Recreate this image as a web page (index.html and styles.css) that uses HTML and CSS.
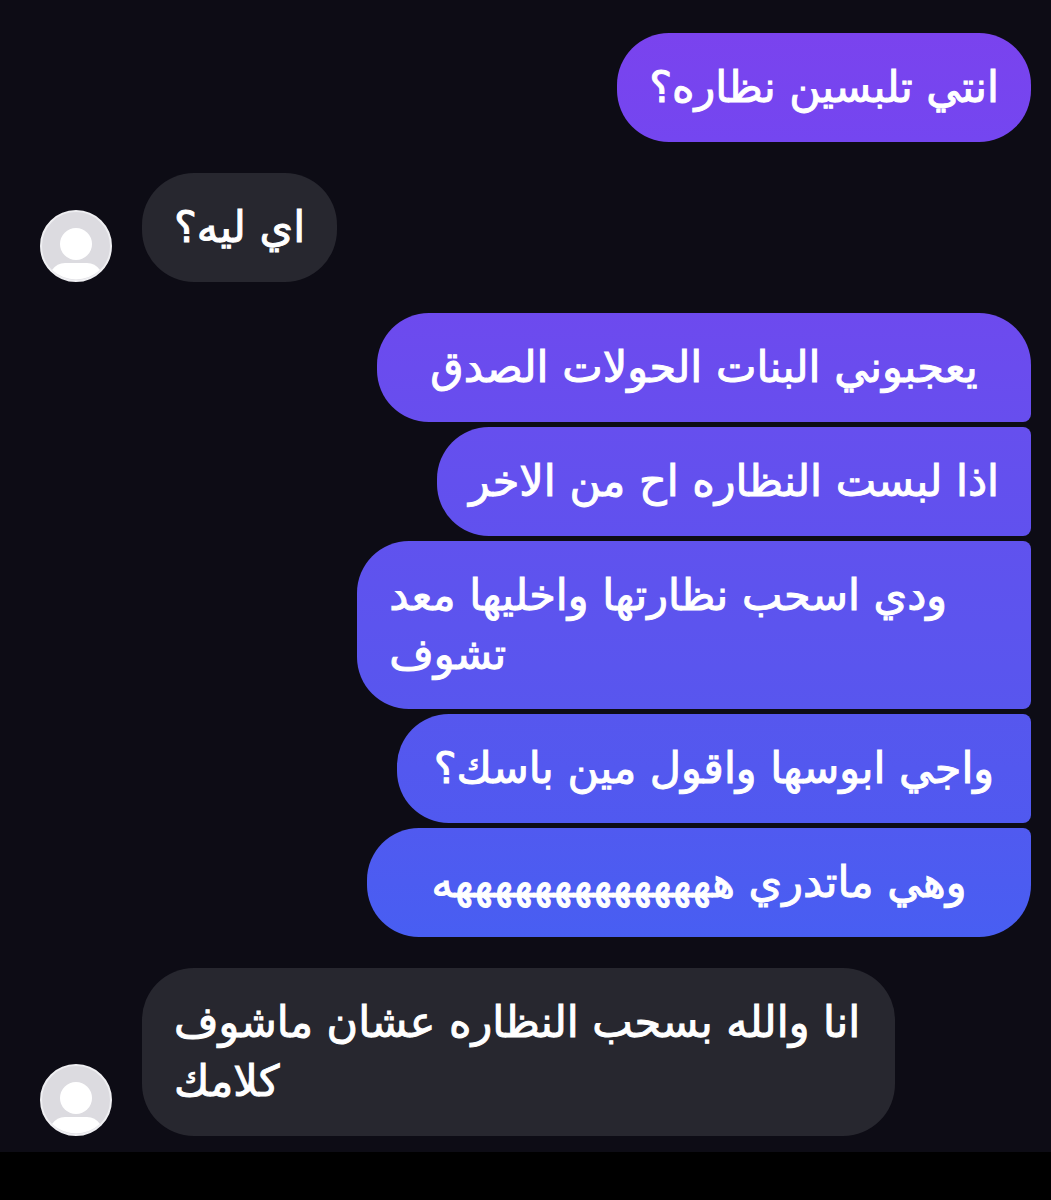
FILE: index.html
```html
<!DOCTYPE html>
<html lang="ar">
<head>
  <meta charset="UTF-8">
  <meta name="viewport" content="width=device-width, initial-scale=1.0">
  <title>محادثة</title>
  <link rel="stylesheet" href="styles.css">
</head>
<body>
  <main class="chat">
    <div class="group sent">
      <p class="bubble violet" dir="rtl">انتي تلبسين نظاره؟</p>
    </div>

    <div class="group received">
      <svg class="avatar" viewBox="0 0 72 72" aria-hidden="true">
        <circle cx="36" cy="36" r="35" fill="#dcdbe0" stroke="#efeff2" stroke-width="2"/>
        <circle cx="36" cy="34" r="16" fill="#fff"/>
        <path d="M12 60q5-7 13-7h22q8 0 13 7a35 35 0 0 1-48 0z" fill="#fff"/>
      </svg>
      <p class="bubble" dir="rtl">اي ليه؟</p>
    </div>

    <div class="group sent">
      <p class="bubble first" dir="rtl">يعجبوني البنات الحولات الصدق</p>
      <p class="bubble second" dir="rtl">اذا لبست النظاره اح من الاخر</p>
      <p class="bubble third" dir="rtl">ودي اسحب نظارتها واخليها معد تشوف</p>
      <p class="bubble fourth" dir="rtl">واجي ابوسها واقول مين باسك؟</p>
      <p class="bubble last" dir="rtl">وهي ماتدري ههههههههههههههه</p>
    </div>

    <div class="group received">
      <svg class="avatar" viewBox="0 0 72 72" aria-hidden="true">
        <circle cx="36" cy="36" r="35" fill="#dcdbe0" stroke="#efeff2" stroke-width="2"/>
        <circle cx="36" cy="34" r="16" fill="#fff"/>
        <path d="M12 60q5-7 13-7h22q8 0 13 7a35 35 0 0 1-48 0z" fill="#fff"/>
      </svg>
      <p class="bubble" dir="rtl">انا والله بسحب النظاره عشان ماشوف كلامك</p>
    </div>
  </main>
  <footer class="bottom-bar"></footer>
</body>
</html>
```

FILE: styles.css
```css
* {
  box-sizing: border-box;
}

body {
  margin: 0;
  min-height: 100vh;
  display: flex;
  flex-direction: column;
  background: #0d0c15;
  color: #fff;
  font-family: "DejaVu Sans", sans-serif;
}

.chat {
  flex: 1;
  display: flex;
  flex-direction: column;
  gap: 31px;
  padding: 33px 20px 16px 40px;
}

.group {
  display: flex;
}

.sent {
  flex-direction: column;
  align-items: flex-end;
  gap: 5px;
}

.received {
  align-items: flex-end;
  gap: 30px;
}

.avatar {
  width: 72px;
  height: 72px;
  flex: none;
}

.bubble {
  margin: 0;
  padding: 25px 32px;
  border-radius: 52px;
  background: #27272f;
  font-size: 43px;
  line-height: 59px;
  text-align: left;
  -webkit-text-stroke: 1px #fff;
}

.sent .bubble {
  max-width: 68%;
}

.received .bubble {
  max-width: 76%;
}

.violet {
  background: linear-gradient(#7a43ee, #7446f0);
}

.first {
  min-width: 66%;
  background: linear-gradient(#6d4aee, #674eee);
  border-bottom-right-radius: 8px;
  text-align: center;
}

.second {
  background: linear-gradient(#664fee, #6051ee);
  border-radius: 52px 8px 8px 52px;
}

.third {
  background: linear-gradient(#6052ee, #5856ee);
  border-radius: 52px 8px 8px 52px;
}

.fourth {
  min-width: 64%;
  background: linear-gradient(#5657ee, #5059f0);
  border-radius: 52px 8px 8px 52px;
  text-align: center;
}

.last {
  min-width: 67%;
  background: linear-gradient(#505af0, #485ef2);
  border-top-right-radius: 8px;
  text-align: center;
}

.bottom-bar {
  height: 48px;
  background: #000;
}
```
